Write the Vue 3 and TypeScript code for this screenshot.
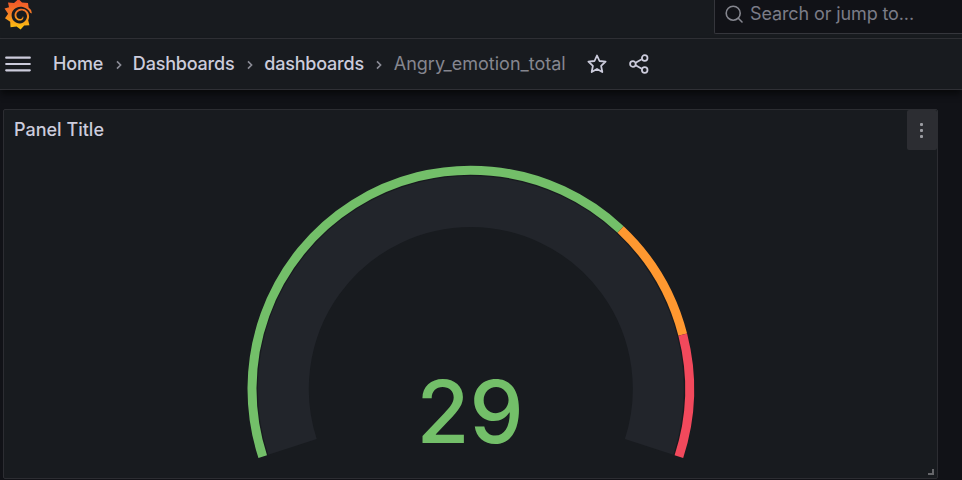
<script setup lang="ts">
interface Crumb {
  label: string
  current?: boolean
}

interface Segment {
  from: number
  to: number
  color: string
}

const crumbs: Crumb[] = [
  { label: 'Home' },
  { label: 'Dashboards' },
  { label: 'dashboards' },
  { label: 'Angry_emotion_total', current: true },
]

const value = 29
const cx = 470.8
const cy = 389

const segments: Segment[] = [
  { from: 0, to: 0.7, color: '#73bf69' },
  { from: 0.7, to: 0.85, color: '#ff9830' },
  { from: 0.85, to: 1, color: '#f2495c' },
]

// The gauge sweeps 216 degrees, starting 18 degrees below the horizontal.
function point(fraction: number, radius: number): string {
  const angle = ((198 - 216 * fraction) * Math.PI) / 180
  return `${(cx + radius * Math.cos(angle)).toFixed(2)} ${(cy - radius * Math.sin(angle)).toFixed(2)}`
}

function arc(from: number, to: number, radius: number): string {
  const large = (to - from) * 216 > 180 ? 1 : 0
  return `M${point(from, radius)}A${radius} ${radius} 0 ${large} 1 ${point(to, radius)}`
}
</script>

<template>
  <div class="app">
    <header class="topbar">
      <svg class="logo" viewBox="0 0 30 32" aria-hidden="true">
        <defs>
          <linearGradient id="flame" x1="0" y1="0" x2="0" y2="1">
            <stop offset="0" stop-color="#f0502a" />
            <stop offset="0.45" stop-color="#f47a26" />
            <stop offset="1" stop-color="#fcc80e" />
          </linearGradient>
        </defs>
        <path
          fill="url(#flame)"
          d="M5 3.5L11 4L15.5 0L19 3.5L25 4L25.6 8.4Q29.3 11 28.6 14.6L27.2 13.8Q25.3 9.4 19.8 8C14 6.6 8.6 10.6 8.6 16.2C8.6 21 12.4 24.6 17 24.4C21.2 24.2 24.1 20.8 24 17.1C23.8 13.6 21.2 11.4 18.3 11.5C15.3 11.6 13.3 13.9 13.4 16.3C13.5 18.7 15.5 20.2 17.5 19.9C18.8 19.7 19.9 18.6 19.9 17.2C20.8 18.1 20.4 20 19.1 20.9C16.8 22.4 13.2 21.4 12 18.5C10.5 14.7 13.1 10.5 17.4 9.8C22.2 9 26 12.5 26.1 17.2C26.1 19 25.7 20.2 25.2 21.2L26.4 26.3L21.2 26.6L17.6 30.5L13.6 27.4L7.5 28.3L7.2 22.7L2 19.2L5.1 14.7L1.5 9.6L6 8.2Z"
        />
      </svg>
      <div class="search">
        <svg class="search-icon" viewBox="0 0 18 18" aria-hidden="true">
          <circle cx="8.2" cy="8.2" r="7" />
          <path d="M13.3 13.3L17 17" />
        </svg>
        <span>Search or jump to...</span>
      </div>
    </header>

    <nav class="navbar">
      <svg class="menu" viewBox="0 0 26 18" aria-hidden="true">
        <path d="M1.2 2.7H24.8M1.2 9H24.8M1.2 15.3H24.8" />
      </svg>
      <ol class="crumbs">
        <li v-for="crumb in crumbs" :key="crumb.label" :class="{ current: crumb.current }">
          <span>{{ crumb.label }}</span>
          <svg v-if="!crumb.current" class="chevron" viewBox="0 0 6 10" aria-hidden="true">
            <path d="M1 1.4L4.6 5L1 8.6" />
          </svg>
        </li>
      </ol>
      <svg class="star" viewBox="0 0 20 20" aria-hidden="true">
        <path d="M10 1.5L12.5 7L18.6 7.7L14.1 11.9L15.3 18L10 15L4.7 18L5.9 11.9L1.4 7.7L7.5 7Z" />
      </svg>
      <svg class="share" viewBox="0 0 20 20" aria-hidden="true">
        <path d="M6.6 8.8L12.7 5.3M6.6 11.2L12.7 14.7" />
        <circle cx="3.9" cy="10" r="2.8" />
        <circle cx="15.7" cy="4" r="2.8" />
        <circle cx="15.7" cy="16" r="2.8" />
      </svg>
    </nav>

    <main class="canvas">
      <section class="panel">
        <header class="panel-head">
          <h2>Panel Title</h2>
          <button class="panel-menu" aria-label="Menu">
            <i></i>
            <i></i>
            <i></i>
          </button>
        </header>
        <svg class="gauge" viewBox="4 150 933 328">
          <path class="track" :d="arc(0, 1, 187.5)" />
          <path
            v-for="segment in segments"
            :key="segment.color"
            class="segment"
            :d="arc(segment.from, segment.to, 218.8)"
            :stroke="segment.color"
          />
          <text class="value" x="470.2" y="443" text-anchor="middle">{{ value }}</text>
        </svg>
        <span class="resize"></span>
      </section>
    </main>
  </div>
</template>

<style>
body {
  background: #111217;
  overflow: hidden;
}
</style>

<style scoped>
.app {
  display: flex;
  flex-direction: column;
  height: 480px;
  overflow: hidden;
  background: #111217;
  color: #ccccdc;
  font-family: Inter, "Liberation Sans", sans-serif;
}

.app * {
  box-sizing: border-box;
}

svg {
  display: block;
  flex: none;
  fill: none;
}

.topbar {
  display: flex;
  flex: none;
  justify-content: space-between;
  align-items: flex-start;
  height: 39px;
  padding-left: 3px;
  background: #181b1f;
  border-bottom: 1px solid #2f3035;
}

.logo {
  width: 30px;
  height: 32px;
  margin-top: -1px;
}

.search {
  display: flex;
  align-items: center;
  width: 248px;
  height: 34px;
  padding: 0 0 6px 10px;
  gap: 7px;
  background: #111217;
  border: 1px solid #35363c;
  border-width: 0 0 1px 1px;
  border-radius: 0 0 0 2px;
  color: #7b7c87;
  font-size: 18px;
  letter-spacing: -0.12px;
  white-space: nowrap;
}

.search-icon {
  width: 18px;
  height: 18px;
  stroke: #85868f;
  stroke-width: 1.6;
  stroke-linecap: round;
}

.navbar {
  display: flex;
  flex: none;
  align-items: center;
  height: 51px;
  padding-left: 5px;
  background: #181b1f;
  border-bottom: 1px solid #2f3035;
  box-shadow: 0 5px 6px -1px #08090b;
}

.menu {
  width: 26px;
  height: 18px;
  stroke: #ccccdc;
  stroke-width: 2.2;
  stroke-linecap: round;
}

.crumbs {
  display: flex;
  margin: 0 0 0 22px;
  padding: 0;
  list-style: none;
  font-size: 18px;
  font-weight: 500;
  letter-spacing: -0.2px;
  line-height: 24px;
  white-space: nowrap;
}

.crumbs li {
  display: flex;
  align-items: center;
}

.crumbs .current {
  color: #85868f;
  font-weight: 400;
  letter-spacing: 0;
}

.chevron {
  width: 6px;
  height: 10px;
  margin: 2px 11.3px 0 12.5px;
  stroke: #8b8c96;
  stroke-width: 1.6;
}

.star,
.share {
  width: 20px;
  height: 20px;
  stroke: #ccccdc;
  stroke-width: 1.8;
  stroke-linejoin: round;
}

.star {
  margin-left: 21px;
}

.share {
  margin-left: 22px;
}

.canvas {
  flex: 1;
  padding: 19px 24px 1px 3px;
}

.panel {
  position: relative;
  height: 370px;
  background: #181b1f;
  border: 1px solid #2c2d32;
  border-radius: 2px;
}

.panel-head {
  display: flex;
  justify-content: space-between;
  height: 40px;
  padding-left: 10px;
}

h2 {
  margin: 0;
  font-size: 18px;
  font-weight: 500;
  line-height: 40px;
}

.panel-menu {
  display: flex;
  flex-direction: column;
  align-items: center;
  justify-content: center;
  gap: 3px;
  width: 30px;
  height: 40px;
  padding: 0 1px 0 0;
  border: 0;
  border-radius: 2px;
  background: #2c2d32;
}

.panel-menu i {
  width: 3px;
  height: 3px;
  border-radius: 1px;
  background: #9b9ca2;
}

.gauge {
  width: 933px;
  height: 328px;
}

.track {
  stroke: #22252b;
  stroke-width: 51;
}

.segment {
  stroke-width: 9;
}

.value {
  fill: #73bf69;
  font-size: 86px;
  font-weight: 500;
}

.resize {
  position: absolute;
  right: 3px;
  bottom: 3px;
  width: 6px;
  height: 6px;
  border-right: 2px solid #65666a;
  border-bottom: 2px solid #65666a;
}
</style>
